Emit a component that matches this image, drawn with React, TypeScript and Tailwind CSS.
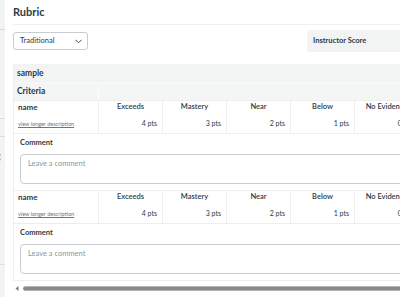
import React from "react";

const ratings = [
  { t: "Exceeds", p: "4 pts" },
  { t: "Mastery", p: "3 pts" },
  { t: "Near", p: "2 pts" },
  { t: "Below", p: "1 pts" },
  { t: "No Evidence", p: "0 pts" },
];

function CriterionBlock() {
  return (
    <div>
      <div className="flex h-[33px] border-t border-[#eeeeee]">
        <div className="w-[84px] shrink-0 pl-[4px] flex flex-col">
          <div className="text-[8px] font-bold leading-[12px] text-[#2d3b45]">name</div>
          <div className="mt-[6px] text-[5.5px] leading-[10px] text-[#6b7780] underline">view longer description</div>
        </div>
        {ratings.map((r) => (
          <div key={r.t} className="w-[64px] shrink-0 border-l border-[#eeeeee] pr-[5px] flex flex-col">
            <div className="text-center text-[7.5px] font-semibold leading-[12px] text-[#2d3b45] whitespace-nowrap pl-[5px]">{r.t}</div>
            <div className="mt-[5px] text-right text-[7px] leading-[11px] text-[#2d3b45]">{r.p}</div>
          </div>
        ))}
      </div>
      <div className="h-[57px] border-t border-[#eeeeee] pl-[6px] pt-[2px]">
        <div className="text-[7.5px] font-bold leading-[14px] text-[#2d3b45]">Comment</div>
        <div className="mt-[4px] h-[30px] w-[420px] rounded-[4px] border border-[#c7cdd1] pl-[7px] pt-[2px] text-[7.5px] leading-[14px] text-[#8b969e]">
          Leave a comment
        </div>
      </div>
    </div>
  );
}

export default function App() {
  return (
    <div
      className="relative flex h-[297px] w-[400px] overflow-hidden bg-[#f4f4f4]"
      style={{ fontFamily: "Lato, 'Open Sans', sans-serif" }}
    >
      <div className="relative w-[5px] shrink-0 bg-[#f3f3f3]">
        <div className="h-[30px] border-b border-[#d8d8d8]" />
        <div className="h-[89px] border-b border-[#dddddd]" />
        <div className="h-[18px] border-b border-[#dddddd]" />
        <div className="relative h-[128px] border-b border-[#e0e0e0]">
          <span className="absolute -left-[4px] top-[14px] text-[9px] leading-none text-[#8a5a2b]">g</span>
        </div>
      </div>
      <div className="flex-1 overflow-hidden bg-white pl-[8px] shadow-[-2px_0_4px_rgba(0,0,0,0.12)]">
        <div className="h-[25px] border-b border-[#f0f0f0] pt-[4px]">
          <div className="text-[11px] font-bold leading-[16px] text-[#2d3b45]">Rubric</div>
        </div>
        <div className="mt-[5px] flex items-start">
          <div className="mt-[2px] flex h-[18px] w-[75px] shrink-0 items-center justify-between rounded-[3px] border border-[#c7cdd1] pl-[6px] pr-[5px]">
            <span className="text-[7.5px] leading-none text-[#2d3b45]">Traditional</span>
            <svg width="7" height="5" viewBox="0 0 7 5" fill="none">
              <path d="M0.5 0.8 L3.5 3.8 L6.5 0.8" stroke="#2d3b45" strokeWidth="0.9" />
            </svg>
          </div>
          <div className="ml-[219px] flex h-[22px] w-[120px] shrink-0 items-center rounded-[3px] bg-[#f2f3f3] pl-[6px]">
            <span className="text-[7.5px] font-bold leading-none text-[#2d3b45] whitespace-nowrap">Instructor Score</span>
          </div>
        </div>
        <div className="mt-[12px] w-[460px] border-l border-b border-[#eeeeee]">
          <div className="flex h-[18px] items-center bg-[#f2f3f3] pl-[3px]">
            <span className="text-[8.5px] font-bold text-[#2d3b45]">sample</span>
          </div>
          <div className="flex h-[18px] border-t border-[#f8f8f8] bg-[#f4f5f5]">
            <div className="flex w-[84px] items-center pl-[3px]">
              <span className="text-[8.5px] font-bold text-[#2d3b45]">Criteria</span>
            </div>
            <div className="flex-1 border-l border-[#fbfbfb]" />
          </div>
          <CriterionBlock />
          <CriterionBlock />
        </div>
        <div className="mt-[5px] flex items-center">
          <svg width="4" height="5" viewBox="0 0 4 5" className="ml-[2px]">
            <path d="M3.5 0 L0.5 2.5 L3.5 5 Z" fill="#7a7a7a" />
          </svg>
          <div className="ml-[4px] h-[5px] flex-1 rounded-l-[3px] border-t border-b border-[#b5b5b5] bg-[#8a8a8a]" />
        </div>
      </div>
    </div>
  );
}
